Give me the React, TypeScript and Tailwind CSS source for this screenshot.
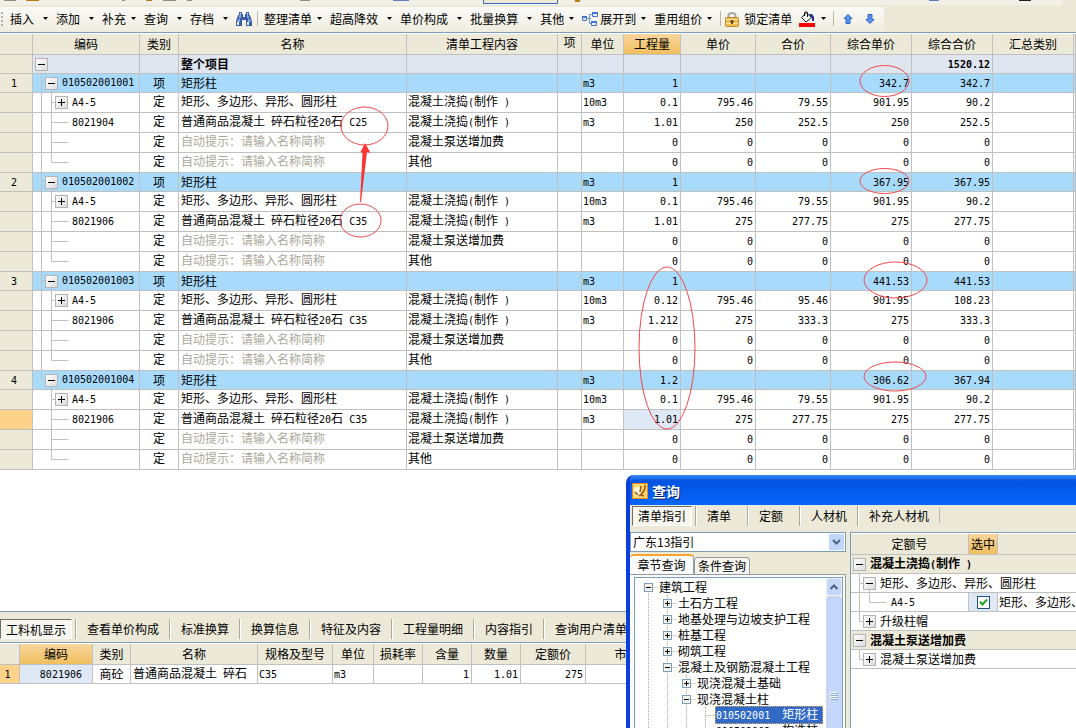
import { useState } from "react";
import type { ReactNode } from "react";

type RowKind = "item" | "quota" | "material" | "hint" | "last";

interface Row {
  kind: RowKind;
  no?: string;
  code?: string;
  name?: string;
  content?: string;
  unit?: string;
  values: string[];
  active?: boolean;
}

const POUR = "混凝土浇捣(制作 )";
const PUMP = "混凝土泵送增加费";
const HINT = "自动提示：请输入名称简称";
const ZEROS = ["0", "0", "0", "0", "0"];

function group(no: string, item: string[], quota: string[], material: string, values: string[], active = false): Row[] {
  return [
    { kind: "item", no, code: `01050200100${no}`, name: "矩形柱", unit: "m3", values: item },
    { kind: "quota", code: "A4-5", name: "矩形、多边形、异形、圆形柱", content: POUR, unit: "10m3", values: quota },
    {
      kind: "material",
      code: material,
      name: `普通商品混凝土 碎石粒径20石 ${material === "8021904" ? "C25" : "C35"}`,
      content: POUR,
      unit: "m3",
      values,
      active,
    },
    { kind: "hint", content: PUMP, values: ZEROS },
    { kind: "last", content: "其他", values: ZEROS },
  ];
}

const rows: Row[] = [
  ...group("1", ["1", "", "", "342.7", "342.7"], ["0.1", "795.46", "79.55", "901.95", "90.2"], "8021904", ["1.01", "250", "252.5", "250", "252.5"]),
  ...group("2", ["1", "", "", "367.95", "367.95"], ["0.1", "795.46", "79.55", "901.95", "90.2"], "8021906", ["1.01", "275", "277.75", "275", "277.75"]),
  ...group("3", ["1", "", "", "441.53", "441.53"], ["0.12", "795.46", "95.46", "901.95", "108.23"], "8021906", ["1.212", "275", "333.3", "275", "333.3"]),
  ...group("4", ["1.2", "", "", "306.62", "367.94"], ["0.1", "795.46", "79.55", "901.95", "90.2"], "8021906", ["1.01", "275", "277.75", "275", "277.75"], true),
];

// Latin runs use a half-width face so that two characters fill one Chinese cell
function Mixed({ text }: { text: string }) {
  return (
    <>
      {text.split(/([\x20-\x7e]+)/).map((part, i) =>
        i % 2 ? (
          <span key={i} className="font-['DejaVu_Sans_Mono',monospace] text-[10px] whitespace-pre">
            {part}
          </span>
        ) : (
          part
        )
      )}
    </>
  );
}

function Toggle({ open, className = "" }: { open: boolean; className?: string }) {
  return (
    <button
      type="button"
      aria-label={open ? "折叠" : "展开"}
      className={`z-10 h-[13px] w-[13px] shrink-0 border border-[#b4b4b4] bg-linear-to-br from-white to-[#dcdcdc] ${className}`}
    >
      <svg viewBox="0 0 11 11" className="block h-[11px] w-[11px]" stroke="#000">
        <path d={open ? "M2 5.5h7" : "M2 5.5h7M5.5 2v7"} />
      </svg>
    </button>
  );
}

const guides: Record<RowKind, string> = {
  item: "M8.5 0v20M8.5 9.5h4M18.5 14v6",
  quota: "M8.5 0v20M18.5 0v20M18.5 9.5h4",
  material: "M8.5 0v20M18.5 0v20M18.5 9.5h17",
  hint: "M8.5 0v20M18.5 0v20M18.5 9.5h17",
  last: "M8.5 0v20M18.5 0v9.5h17",
};

const lastGuides: Record<RowKind, string> = {
  item: "M8.5 0v9.5h4M18.5 14v6",
  quota: "M18.5 0v20M18.5 9.5h4",
  material: "M18.5 0v20M18.5 9.5h17",
  hint: "M18.5 0v20M18.5 9.5h17",
  last: "M18.5 0v9.5h17",
};

function CodeCell({ row, final }: { row: Row; final: boolean }) {
  return (
    <div className="grid items-center">
      <svg className="-my-px h-5 w-10 [grid-area:1/1]" viewBox="0 0 40 20" fill="none" stroke="#c0c0c0">
        <path d={final ? lastGuides[row.kind] : guides[row.kind]} />
      </svg>
      <div className="flex items-center [grid-area:1/1]">
        {row.kind === "item" && <Toggle open className="mr-1 ml-3" />}
        {row.kind === "quota" && <Toggle open={false} className="mr-1 ml-[22px]" />}
        {row.kind === "material" && <span className="w-[39px]" />}
        {row.code && <Mixed text={row.code} />}
      </div>
    </div>
  );
}

const th = "border-r border-b border-[#c0c0c0] bg-[#ece9d8] p-0 font-normal";
const thActive = "border-r border-b border-[#c0c0c0] bg-linear-to-b from-[#f9d59c] to-[#f0bf5c] p-0 font-normal";
const td = "overflow-hidden border-r border-b border-[#c0c0c0] p-0 whitespace-nowrap";

function GridRow({ row, final }: { row: Row; final: boolean }) {
  const isItem = row.kind === "item";
  const text = isItem ? td : `${td} align-top`;

  return (
    <tr className={isItem ? "h-[19px] bg-[#a8dbfb]" : "h-5 bg-white"}>
      <td className={`${td} pr-1 text-center ${row.active ? "bg-[#ffd28a]" : "bg-[#ece9d8]"}`}>
        {row.no && <Mixed text={row.no} />}
      </td>
      <td className={td}>
        <CodeCell row={row} final={final} />
      </td>
      <td className={`${text} text-center`}>{isItem ? "项" : "定"}</td>
      <td className={`${text} pl-0.5 ${row.name ? "" : "text-[#aca899]"}`}>
        <Mixed text={row.name ?? HINT} />
      </td>
      <td className={`${text} pl-px`}>
        <Mixed text={row.content ?? ""} />
      </td>
      <td className={td} />
      <td className={`${text} pl-px`}>
        <Mixed text={row.unit ?? ""} />
      </td>
      {row.values.map((value, n) => (
        <td key={n} className={`${text} pr-0.5 text-right ${row.active && n === 0 ? "bg-[#dfe9f6]" : ""}`}>
          <Mixed text={value} />
        </td>
      ))}
      <td className={td} />
      <td className={td} />
    </tr>
  );
}

function MainGrid() {
  return (
    <table className="w-full table-fixed border-separate border-spacing-0">
      <colgroup>
        <col className="w-[33px]" />
        <col className="w-[107px]" />
        <col className="w-[39px]" />
        <col className="w-[228px]" />
        <col className="w-[151px]" />
        <col className="w-[24px]" />
        <col className="w-[42px]" />
        <col className="w-[57px]" />
        <col className="w-[75px]" />
        <col className="w-[75px]" />
        <col className="w-[81px]" />
        <col className="w-[81px]" />
        <col className="w-[81px]" />
        <col />
      </colgroup>
      <thead>
        <tr className="h-[21px]">
          <th className={th} />
          <th className={th}>编码</th>
          <th className={th}>类别</th>
          <th className={th}>名称</th>
          <th className={th}>清单工程内容</th>
          <th className={`${th} align-top`}>项</th>
          <th className={th}>单位</th>
          <th className={thActive}>工程量</th>
          <th className={th}>单价</th>
          <th className={th}>合价</th>
          <th className={th}>综合单价</th>
          <th className={th}>综合合价</th>
          <th className={th}>汇总类别</th>
          <th className={th} />
        </tr>
      </thead>
      <tbody>
        <tr className="h-[19px] bg-[#dfe6f0] font-bold">
          <td className={`${td} bg-[#ece9d8]`} />
          <td className={td}>
            <div className="flex items-center">
              <Toggle open className="ml-0.5" />
            </div>
          </td>
          <td className={td} />
          <td className={`${td} pl-0.5`}>整个项目</td>
          <td className={td} />
          <td className={td} />
          <td className={td} />
          <td className={td} />
          <td className={td} />
          <td className={td} />
          <td className={td} />
          <td className={`${td} pr-0.5 text-right`}>
            <Mixed text="1520.12" />
          </td>
          <td className={td} />
          <td className={td} />
        </tr>
        {rows.map((row, i) => (
          <GridRow key={i} row={row} final={i >= rows.length - 5} />
        ))}
      </tbody>
    </table>
  );
}

function Caret() {
  return (
    <svg viewBox="0 0 5 3" className="h-[3px] w-[5px] shrink-0">
      <path d="M0 0h5L2.5 3z" />
    </svg>
  );
}

function MenuButton({ children, wide = false }: { children: ReactNode; wide?: boolean }) {
  return (
    <button type="button" className={`flex shrink-0 items-center pr-2 ${wide ? "gap-[9px]" : "gap-[5px]"}`}>
      {children}
      <Caret />
    </button>
  );
}

function Separator() {
  return <span className="h-[15px] w-px shrink-0 bg-[#b9b7a9]" />;
}

function Toolbar() {
  return (
    <div className="bg-[#ece9d8]">
      {/* Lower edge of the toolbar row above */}
      <svg className="block h-[7px] w-[1076px]" viewBox="0 0 1076 7">
        <path fill="#f3f1e7" d="M0 0h1062v3q0 2-4 2H0z" />
        <path fill="#8c8c8c" d="M4 0h12v1H4zM122 0h3v1h-3zM163 0h13v1h-13zM187 0h5v1h-5zM300 0h10v1h-10z" />
        <path fill="#b97a12" d="M26 0h13v1H26zM146 0h6v1h-6zM575 0h5v2h-5z" />
        <path fill="#5d7fbe" d="M393 0h16v1h-16zM929 0h10v1h-10z" />
        <path fill="#222" d="M1019 0h12v1h-12z" />
        <path fill="#ece9d8" stroke="#316ac5" d="M483.5-2v5.5h74V-2" />
      </svg>
      <div className="flex h-[25px] w-[884px] items-center rounded-r-sm bg-linear-to-b from-[#fbfaf7] to-[#efecdf] pb-0.5">
        <svg className="ml-px h-4 w-[9px] shrink-0" viewBox="0 0 9 16" fill="#b5b2a0">
          <path d="M0 1h2v2H0zM0 5h2v2H0zM0 9h2v2H0zM0 13h2v2H0z" />
        </svg>
        <MenuButton wide>插入</MenuButton>
        <MenuButton wide>添加</MenuButton>
        <MenuButton>补充</MenuButton>
        <MenuButton wide>查询</MenuButton>
        <MenuButton wide>存档</MenuButton>
        <button type="button" aria-label="查找" className="mr-[5px] shrink-0">
          <svg className="block h-4 w-4" viewBox="0 0 16 16">
            <path fill="#3a5fa8" d="M3 1h3v2h1v3h2V3h1V1h3v3h1l2 6v5h-6V9H6v6H0v-5l2-6h1z" />
            <path fill="#86a9e6" d="M4 3h1v4H3V5zM11 3h1v2h1v2h-2zM2 8h2v3H1zM12 8h2l1 3h-3z" />
            <path fill="#e9f1fd" d="M1 11h2v3H1zM11 11h2v3h-2zM4 2h1v1H4zM11 2h1v1h-1zM7 4h2v1H7z" />
          </svg>
        </button>
        <Separator />
        <span className="w-1.5 shrink-0" />
        <MenuButton>整理清单</MenuButton>
        <MenuButton wide>超高降效</MenuButton>
        <MenuButton wide>单价构成</MenuButton>
        <MenuButton wide>批量换算</MenuButton>
        <MenuButton>其他</MenuButton>
        <svg className="mr-0.5 h-4 w-4 shrink-0" viewBox="0 0 16 16">
          <path fill="none" stroke="#6f93d8" d="M5 7.500h4M7.500 3.500v9M7.500 3.500H10M7.500 12.500H10" />
          <path fill="#e6effc" stroke="#4a72c0" d="M.5 5.500h4v4h-4zM10.500 1.500h5v4h-5zM9.500 10.500h5v4h-5z" />
          <path fill="#3f74d0" d="M0 5h5v2H0zM10 1h6v2h-6zM9 10h6v2H9z" />
        </svg>
        <MenuButton>展开到</MenuButton>
        <MenuButton>重用组价</MenuButton>
        <Separator />
        <button type="button" className="ml-1 flex shrink-0 items-center gap-[5px]">
          <svg className="h-4 w-[14px]" viewBox="0 0 14 16">
            <path fill="none" stroke="#a8a8a8" strokeWidth="2" d="M3.500 8V4.500Q3.500 2 7 2t3.500 2.500V8" />
            <rect x=".5" y="6.500" width="13" height="9" rx="1" fill="#edbe55" stroke="#b98a26" />
            <path fill="#f9e2a0" d="M1 8h12v1H1zM1 12h12v1H1z" />
            <path fill="#6b4a0a" d="M6 9h2v1h1v1H8v2H6v-2H5v-1h1z" />
          </svg>
          锁定清单
        </button>
        <button type="button" aria-label="填充颜色" className="mx-[7px] flex shrink-0 items-center gap-[6px]">
          <svg className="h-4 w-4" viewBox="0 0 16 16">
            <path fill="#fff" stroke="#111" d="M2.500 6.500L7.500 2l5 4.500L7 11z" />
            <path fill="none" stroke="#111" d="M5.500 5V1.500q1.500-1.500 3 0V6" />
            <path fill="#1b2f8f" d="M10 3h3l2 3v4h-2V7z" />
            <path fill="#f00" d="M0 12h16v4H0z" />
          </svg>
          <Caret />
        </button>
        <Separator />
        <button type="button" aria-label="上移" className="ml-2 shrink-0">
          <svg className="block h-3 w-3" viewBox="0 0 12 12">
            <path fill="#5b93f0" stroke="#2f62c4" d="M6 1.500l4 4H8v5H4v-5H2z" />
          </svg>
        </button>
        <button type="button" aria-label="下移" className="ml-[10px] shrink-0">
          <svg className="block h-3 w-3" viewBox="0 0 12 12">
            <path fill="#5b93f0" stroke="#2f62c4" d="M6 10.500l-4-4h2v-5h4v5h2z" />
          </svg>
        </button>
      </div>
      <div className="h-0.5 border-t border-[#7b9ebd] bg-white" />
    </div>
  );
}

// Hand-drawn review marks on top of the figures
function Marks() {
  return (
    <svg className="pointer-events-none absolute top-0 left-0 h-[470px] w-[1076px]" viewBox="0 0 1076 470" fill="none" stroke="#f2484a">
      <ellipse cx="364.500" cy="126" rx="23.500" ry="19" />
      <ellipse cx="360.500" cy="220.500" rx="20.500" ry="16.500" />
      <ellipse cx="884.500" cy="81" rx="24.500" ry="15.500" />
      <ellipse cx="884.500" cy="181" rx="24.500" ry="12.500" />
      <ellipse cx="895.500" cy="280" rx="31.500" ry="18" />
      <ellipse cx="895" cy="376.500" rx="31" ry="14.500" />
      <ellipse cx="667" cy="348" rx="28" ry="81" />
      <path fill="#fb3434" stroke="none" d="M360 202l2.500-49-2-1 4.500-9 5.500 10-3.500-1-6 50z" />
    </svg>
  );
}

function TabButton({ children, first = false }: { children: ReactNode; first?: boolean }) {
  if (first) {
    return (
      <button
        type="button"
        className="mr-[3px] h-5 shrink-0 border border-t-[#716f64] border-r-white border-b-white border-l-[#716f64] bg-[#f6f5ee] px-[5px] pt-px"
      >
        {children}
      </button>
    );
  }
  return (
    <button type="button" className="h-5 min-w-[52px] shrink-0 border-l border-[#aca899] pr-[10px] pl-[11px] text-left shadow-[inset_1px_0_0_#fff]">
      {children}
    </button>
  );
}

function ResourcePanel() {
  return (
    <section className="min-h-[117px] border-t border-[#7b9ebd]">
      <div className="flex h-[30px] items-center overflow-hidden bg-[#ece9d8] pt-1">
        <TabButton first>工料机显示</TabButton>
        <TabButton>查看单价构成</TabButton>
        <TabButton>标准换算</TabButton>
        <TabButton>换算信息</TabButton>
        <TabButton>特征及内容</TabButton>
        <TabButton>工程量明细</TabButton>
        <TabButton>内容指引</TabButton>
        <TabButton>查询用户清单</TabButton>
      </div>
      <div className="h-0.5 border-t border-[#7b9ebd] bg-white" />
      <table className="w-full table-fixed border-separate border-spacing-0">
        <colgroup>
          <col className="w-[20px]" />
          <col className="w-[73px]" />
          <col className="w-[38px]" />
          <col className="w-[127px]" />
          <col className="w-[75px]" />
          <col className="w-[41px]" />
          <col className="w-[49px]" />
          <col className="w-[49px]" />
          <col className="w-[49px]" />
          <col className="w-[65px]" />
          <col className="w-[94px]" />
          <col />
        </colgroup>
        <thead>
          <tr className="h-[21px]">
            <th className={th} />
            <th className={thActive}>编码</th>
            <th className={th}>类别</th>
            <th className={th}>名称</th>
            <th className={th}>规格及型号</th>
            <th className={th}>单位</th>
            <th className={th}>损耗率</th>
            <th className={th}>含量</th>
            <th className={th}>数量</th>
            <th className={th}>定额价</th>
            <th className={th}>市场价</th>
            <th className={th} />
          </tr>
        </thead>
        <tbody>
          <tr className="h-[19px]">
            <td className={`${td} bg-[#ffd28a] pr-1 text-center`}>
              <Mixed text="1" />
            </td>
            <td className={`${td} bg-[#dfe9f6] pr-[10px] text-right`}>
              <Mixed text="8021906" />
            </td>
            <td className={`${td} text-center`}>商砼</td>
            <td className={`${td} pl-0.5`}>
              <Mixed text="普通商品混凝土 碎石" />
            </td>
            <td className={`${td} pl-px`}>
              <Mixed text="C35" />
            </td>
            <td className={`${td} pl-px`}>
              <Mixed text="m3" />
            </td>
            <td className={td} />
            <td className={`${td} pr-0.5 text-right`}>
              <Mixed text="1" />
            </td>
            <td className={`${td} pr-0.5 text-right`}>
              <Mixed text="1.01" />
            </td>
            <td className={`${td} pr-0.5 text-right`}>
              <Mixed text="275" />
            </td>
            <td className={td} />
            <td className={td} />
          </tr>
        </tbody>
      </table>
    </section>
  );
}

const treeNodes = [
  { level: 0, open: true, label: "建筑工程" },
  { level: 1, open: false, label: "土石方工程" },
  { level: 1, open: false, label: "地基处理与边坡支护工程" },
  { level: 1, open: false, label: "桩基工程" },
  { level: 1, open: false, label: "砌筑工程" },
  { level: 1, open: true, label: "混凝土及钢筋混凝土工程" },
  { level: 2, open: false, label: "现浇混凝土基础" },
  { level: 2, open: true, label: "现浇混凝土柱" },
  { level: 3, label: "010502001  矩形柱", selected: true },
  { level: 3, label: "010502002  构造柱" },
];

function ChapterTree() {
  return (
    <ul className="min-w-0 flex-1 overflow-hidden pt-px pl-1">
      {treeNodes.map((node, i) => (
        <li key={node.label} className="flex h-4 items-center whitespace-nowrap">
          {Array.from({ length: node.level }, (_, n) => (
            <svg key={n} className="h-4 w-[19px] shrink-0" viewBox="0 0 19 16" stroke="#aca899" strokeDasharray="1 1">
              <path d="M9.500 0v16" />
            </svg>
          ))}
          <svg className="h-4 w-[19px] shrink-0" viewBox="0 0 19 16" stroke="#aca899" strokeDasharray="1 1">
            <path d={i === 0 ? "M9.500 8v8M9.500 8.500H19" : "M9.500 0v16M9.500 8.500H19"} />
            {node.open !== undefined && (
              <g strokeDasharray="none">
                <rect x="5.500" y="4.500" width="8" height="8" fill="#f4f2ea" stroke="#7b9ebd" />
                <path stroke="#000" d={node.open ? "M7 8.500h5" : "M7 8.500h5M9.500 6v5"} />
              </g>
            )}
          </svg>
          {node.selected ? (
            <span className="w-[108px] border border-dotted border-[#e0a860] bg-[#316ac5] leading-[14px] text-white">
              <Mixed text={node.label} />
            </span>
          ) : (
            <span className="pl-px">
              <Mixed text={node.label} />
            </span>
          )}
        </li>
      ))}
    </ul>
  );
}

const cell = "border-b border-[#c0c0c0] p-0 whitespace-nowrap";

function QuotaTable() {
  const [picked, setPicked] = useState(true);

  return (
    <table className="w-full table-fixed border-separate border-spacing-0">
      <colgroup>
        <col className="w-[118px]" />
        <col className="w-[29px]" />
        <col />
      </colgroup>
      <thead>
        <tr className="h-[21px]">
          <th className={th}>定额号</th>
          <th className={thActive}>选中</th>
          <th className="border-b border-[#c0c0c0] bg-[#ece9d8]" />
        </tr>
      </thead>
      <tbody>
        <tr className="h-[19px] bg-[#ece9d8] font-bold">
          <td colSpan={3} className={cell}>
            <div className="flex items-center gap-1 pl-0.5">
              <Toggle open />
              <span>
                <Mixed text={POUR} />
              </span>
            </div>
          </td>
        </tr>
        <tr className="h-[19px]">
          <td colSpan={3} className={cell}>
            <div className="grid items-center">
              <svg className="-my-px h-[19px] w-10 [grid-area:1/1]" viewBox="0 0 40 19" fill="none" stroke="#c0c0c0">
                <path d="M8.500 0v19M8.500 9.500h4M18.500 14v5" />
              </svg>
              <div className="flex items-center gap-1 pl-3 [grid-area:1/1]">
                <Toggle open />
                矩形、多边形、异形、圆形柱
              </div>
            </div>
          </td>
        </tr>
        <tr className="h-[19px]">
          <td className={`${cell} border-r`}>
            <div className="grid items-center">
              <svg className="-my-px h-[19px] w-10 [grid-area:1/1]" viewBox="0 0 40 19" fill="none" stroke="#c0c0c0">
                <path d="M8.500 0v19M18.500 0v9.500h17" />
              </svg>
              <label htmlFor="pick-quota" className="pl-10 [grid-area:1/1]">
                <Mixed text="A4-5" />
              </label>
            </div>
          </td>
          <td className={`${cell} border-r bg-[#dfe9f6]`}>
            <div className="grid place-items-center">
              <input
                id="pick-quota"
                type="checkbox"
                checked={picked}
                onChange={(e) => setPicked(e.target.checked)}
                className="peer h-[13px] w-[13px] appearance-none border border-[#1c5180] bg-white [grid-area:1/1]"
              />
              <svg className="pointer-events-none hidden h-[9px] w-[9px] [grid-area:1/1] peer-checked:block" viewBox="0 0 9 9" fill="none" stroke="#21a121" strokeWidth="2">
                <path d="M1 3.500l2.500 3L8 1.500" />
              </svg>
            </div>
          </td>
          <td className={`${cell} overflow-hidden pl-px`}>矩形、多边形、异形、圆形柱</td>
        </tr>
        <tr className="h-[19px]">
          <td colSpan={3} className={cell}>
            <div className="grid items-center">
              <svg className="-my-px h-[19px] w-10 [grid-area:1/1]" viewBox="0 0 40 19" fill="none" stroke="#c0c0c0">
                <path d="M8.500 0v9.500h4" />
              </svg>
              <div className="flex items-center gap-1 pl-3 [grid-area:1/1]">
                <Toggle open={false} />
                升级柱帽
              </div>
            </div>
          </td>
        </tr>
        <tr className="h-[19px] bg-[#ece9d8] font-bold">
          <td colSpan={3} className={cell}>
            <div className="flex items-center gap-1 pl-0.5">
              <Toggle open />
              {PUMP}
            </div>
          </td>
        </tr>
        <tr className="h-[19px]">
          <td colSpan={3} className={cell}>
            <div className="grid items-center">
              <svg className="-my-px h-[19px] w-10 [grid-area:1/1]" viewBox="0 0 40 19" fill="none" stroke="#c0c0c0">
                <path d="M8.500 0v9.500h4" />
              </svg>
              <div className="flex items-center gap-1 pl-3 [grid-area:1/1]">
                <Toggle open={false} />
                {PUMP}
              </div>
            </div>
          </td>
        </tr>
      </tbody>
    </table>
  );
}

function QueryWindow() {
  return (
    <div className="absolute top-[475px] right-0 bottom-0 left-[626px] flex flex-col overflow-hidden rounded-tl-lg border-l-4 border-[#0a3fdc] bg-[#ece9d8]">
      <div className="flex h-[30px] shrink-0 items-center gap-1 bg-linear-to-b from-[#3a8cf5] via-[#0453e3] via-20% to-[#0666fb] pt-0.5 pl-0.5">
        <svg className="h-4 w-4" viewBox="0 0 16 16">
          <path fill="#e08a18" d="M0 0h16v16H0z" />
          <path fill="#ffd873" d="M1 1h14v14H1z" />
          <path fill="#fff8e0" d="M2 6l2-3 1 3 1-4 2 4 1 4-3 4-3-3z" />
          <path fill="none" stroke="#a5540c" strokeWidth="1.500" d="M13 2q1 6-6 11M3 9l3 3M9 3l-1 6M12 13l-3-1" />
        </svg>
        <h2 className="text-sm font-bold text-white [text-shadow:1px_1px_0_#0a246a]">查询</h2>
      </div>
      <div className="flex h-[22px] shrink-0 items-center pb-px pl-0.5">
        <TabButton first>清单指引</TabButton>
        <TabButton>清单</TabButton>
        <TabButton>定额</TabButton>
        <TabButton>人材机</TabButton>
        <TabButton>补充人材机</TabButton>
        <Separator />
      </div>
      <div className="flex min-h-0 flex-1 gap-1 pt-[5px]">
        <div className="flex w-[216px] shrink-0 flex-col">
          <div className="grid shrink-0 items-center">
            <select
              aria-label="指引"
              className="h-5 w-full appearance-none border border-[#7b9ebd] bg-white pl-0.5 [grid-area:1/1]"
            >
              <option>广东13指引</option>
            </select>
            <svg className="pointer-events-none mr-0.5 h-4 w-[15px] justify-self-end [grid-area:1/1]" viewBox="0 0 15 16">
              <rect width="15" height="16" rx="1" fill="#c2d5fc" />
              <path fill="none" stroke="#4d6185" strokeWidth="2" d="M4 6l3.500 3.500L11 6" />
            </svg>
          </div>
          <div className="flex shrink-0 items-end pt-0.5">
            <button type="button" className="h-5 w-16 rounded-t-sm border-t-2 border-r border-t-[#f7a430] border-r-[#919b9c] bg-[#fbfbfc] leading-[14px]">
              章节查询
            </button>
            <button type="button" className="h-[17px] w-14 rounded-t-sm border border-b-0 border-[#919b9c] bg-[#f6f5ef]">
              条件查询
            </button>
          </div>
          <div className="flex min-h-0 flex-1 border-t border-r border-[#919b9c] bg-[#fbfbfc] pt-0.5 pr-0.5 pl-1">
            <div className="flex min-w-0 flex-1 border border-b-0 border-[#7b9ebd] bg-white">
              <ChapterTree />
              <svg className="h-full w-4 shrink-0" viewBox="0 0 16 160" preserveAspectRatio="xMidYMin slice">
                <path fill="#f3f1ec" d="M0 0h16v160H0z" />
                <rect x="1" y="1" width="14" height="16" rx="2" fill="#c6d7fc" />
                <path fill="none" stroke="#4d6185" strokeWidth="2" d="M4.500 11L8 7.500l3.500 3.500" />
                <rect x="1" y="19" width="14" height="141" rx="2" fill="#c6d7fc" stroke="#b4c8f4" />
                <path stroke="#fff" d="M4 114.500h7M4 116.500h7M4 118.500h7M4 120.500h7" />
                <path stroke="#8fa9e0" d="M5 115.500h7M5 117.500h7M5 119.500h7M5 121.500h7" />
              </svg>
            </div>
          </div>
        </div>
        <div className="min-w-0 flex-1 overflow-hidden border-t border-l border-[#7b9ebd] bg-white pt-px">
          <QuotaTable />
        </div>
      </div>
    </div>
  );
}

export default function App() {
  return (
    <main className="relative flex min-h-screen flex-col overflow-hidden bg-white font-['Noto_Sans_CJK_SC',sans-serif] text-xs leading-4 text-black">
      <Toolbar />
      <div className="flex-1">
        <MainGrid />
      </div>
      <ResourcePanel />
      <Marks />
      <QueryWindow />
    </main>
  );
}
